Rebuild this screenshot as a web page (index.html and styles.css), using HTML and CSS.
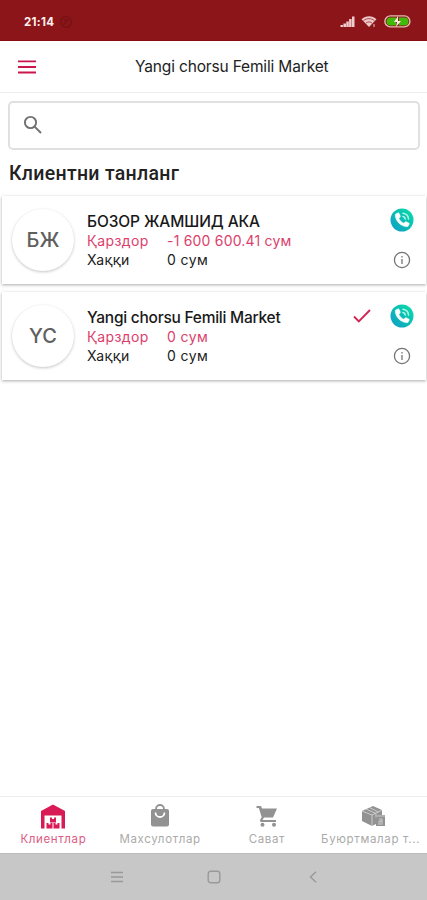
FILE: index.html
```html
<!DOCTYPE html>
<html lang="uz">
<head>
<meta charset="utf-8">
<meta name="viewport" content="width=device-width">
<title>Yangi chorsu Femili Market</title>
<link rel="stylesheet" href="styles.css">
</head>
<body>
<svg class="defs" width="0" height="0" aria-hidden="true">
  <defs>
    <linearGradient id="teal" x1="1" y1="0" x2="0" y2="1">
      <stop offset="0" stop-color="#08dfa5"/><stop offset="1" stop-color="#109bc8"/>
    </linearGradient>
    <symbol id="call" viewBox="0 0 24 24">
      <circle cx="12" cy="12" r="11.5" fill="url(#teal)"/>
      <path d="M6.1 5.8 8 4.9c.5-.2.9 0 1.100.4l1.200 2.700c.2.400.1.800-.2 1.100L8.900 10.200c.9 2.300 2.600 4.100 4.900 5l1.300-1.300c.3-.3.700-.3 1.100-.2l2.600 1.300c.4.200.5.600.4 1l-.9 1.900c-.3.500-.8.800-1.400.8C10.800 18.500 5.200 12.700 5.300 7c0-.5.300-1 .8-1.200Z" fill="#fff" stroke="#fff" stroke-width=".5"/>
      <path d="M13 8.500a3 3 0 0 1 2.300 2.500M13 5.300a6.300 6.300 0 0 1 5.500 5.700" fill="none" stroke="#b5f5e8" stroke-width="1.500" stroke-linecap="round"/>
    </symbol>
    <symbol id="info" viewBox="0 0 18 18">
      <circle cx="9" cy="9" r="7.600" fill="none" stroke="#737373" stroke-width="1.300"/>
      <path d="M9 8v5M9 5v1.500" stroke="#888" stroke-width="1.500"/>
    </symbol>
  </defs>
</svg>
<div class="app">
  <div class="status">
    <span class="time">21:14</span>
    <svg class="dim" width="14" height="14" viewBox="0 0 14 14"><circle cx="7" cy="7" r="5.300"/><path d="m4.500 9.500 5-5M5 5h3"/></svg>
    <div class="signals">
      <svg width="15" height="12" viewBox="0 0 15 12"><path d="M.5 9H3v2H.5zM3.400 7.500H6V11H3.400zM6.300 5.500h2.500V11H6.300zM9.100 3h2.500v8H9.100zM12 .5h2.500V11H12z" fill="#f0cccc"/></svg>
      <svg class="wifi" width="16" height="13" viewBox="0 0 16 13"><path d="M.5 4.200C4.800.2 11.200.2 15.500 4.200L8 12Z" fill="#edc9c9"/><path d="M2.500 5.600c3.500-2.600 7.500-2.600 11 0M5 8c2-1.500 4-1.500 6 0" fill="none" stroke="#8b1518" stroke-width=".7"/><path d="M13 9v3" fill="none" stroke="#edc9c9"/></svg>
      <svg class="battery" width="27" height="13" viewBox="0 0 27 13"><rect x=".9" y=".9" width="25" height="11" rx="5.500" fill="#8b1518" stroke="#e5b9b0" stroke-width="1.400"/><path d="M6.500 2.500H12v8H6.500a4 4 0 0 1 0-8ZM15 2.500h5.500a4 4 0 0 1 0 8H15Z" fill="#41b909"/><path d="m14 1-4 6h3l-1 5 5-6h-3Z" fill="#ffe9e4"/></svg>
    </div>
  </div>
  <header class="header">
    <svg class="menu" width="18" height="14" viewBox="0 0 18 14"><path d="M0 1.300h18M0 7h18M0 12.500h18" stroke="#cc174d" stroke-width="1.800"/></svg>
    <h1>Yangi chorsu Femili Market</h1>
  </header>
  <main>
    <div class="search"><svg width="20" height="20" viewBox="0 0 20 20"><circle cx="7.500" cy="7.500" r="5.600"/><path d="m11.600 11.600 6.400 6.400"/></svg></div>
    <h2>Клиентни танланг</h2>
    <article class="card">
      <div class="avatar">БЖ</div>
      <div class="details">
        <div class="name cyr">БОЗОР ЖАМШИД АКА</div>
        <div class="row debt"><span>Қарздор</span><span class="amount">-1 600 600.41 сум</span></div>
        <div class="row"><span>Хаққи</span><span>0 сум</span></div>
      </div>
      <div class="actions"><svg width="24" height="24"><use href="#call"/></svg><svg width="18" height="18"><use href="#info"/></svg></div>
    </article>
    <article class="card">
      <div class="avatar">YC</div>
      <div class="details">
        <div class="name">Yangi chorsu Femili Market</div>
        <div class="row debt"><span>Қарздор</span><span>0 сум</span></div>
        <div class="row"><span>Хаққи</span><span>0 сум</span></div>
      </div>
      <svg class="check" width="18" height="14" viewBox="0 0 18 14"><path d="m1 7.500 4.800 4.800L17 1"/></svg>
      <div class="actions"><svg width="24" height="24"><use href="#call"/></svg><svg width="18" height="18"><use href="#info"/></svg></div>
    </article>
  </main>
  <nav class="tabs">
    <div class="tab active"><svg width="26" height="25" viewBox="0 0 26 25"><path d="M13 .5 25 7v17.500h-3.500V11.500h-17v13H1V7Z"/><path d="M10 13.500h2v1.500h2v-1.500h2v5h-6ZM6.500 19h2v1.500h2V19h2v5.500h-6ZM13.500 19h2v1.500h2V19h2v5.500h-6Z"/></svg><span>Клиентлар</span></div>
    <div class="tab"><svg width="26" height="25" viewBox="0 0 26 25"><path d="M6 5h14a2 2 0 0 1 2 2v13.500a2 2 0 0 1-2 2H6a2 2 0 0 1-2-2V7c0-1.100.9-2 2-2Z"/><path d="M9 6V5a4 4 0 0 1 8 0v1" fill="none" stroke="#929292" stroke-width="1.800"/><path d="M8.500 8.500a4.500 4.500 0 0 0 9 0" fill="none" stroke="#fff" stroke-width="1.800"/></svg><span>Махсулотлар</span></div>
    <div class="tab"><svg width="26" height="25" viewBox="0 0 26 25"><path d="M2.500 2H7L8 4.500h15l-4 9H10L8.500 16H22v2H7.500c-1.500 0-2-1.200-1.300-2.300l1.500-2.500L4.900 4H2.500Z"/><circle cx="8.500" cy="20.800" r="2"/><circle cx="20" cy="20.800" r="2"/></svg><span>Сават</span></div>
    <div class="tab"><svg width="26" height="25" viewBox="0 0 26 25"><path d="m1 7 11-5 9 4v5h3v11h-9v-2l-4 2L1 17Z"/><path d="m1 7 10 4 10-5M11 11v11M5 5l10 4.500v4M8.500 3.500l9 4.500M16 12h8M19 14v3h2v-3" fill="none" stroke="#d8d8d8" stroke-width=".8"/><path d="M17 18h5M17 20h5" stroke="#ddd" stroke-width=".8"/></svg><span class="long">Буюртмалар т...</span></div>
  </nav>
  <div class="system">
    <svg width="12" height="12" viewBox="0 0 12 12"><path d="M0 1.500h12M0 6h12M0 10.500h12"/></svg>
    <svg width="14" height="14" viewBox="0 0 14 14"><rect x="1.200" y="1.200" width="11.600" height="11.600" rx="2.500"/></svg>
    <svg width="8" height="12" viewBox="0 0 8 12"><path d="M7 .8 1.500 6 7 11.200"/></svg>
  </div>
</div>
</body>
</html>
```
FILE: styles.css
```css
* { box-sizing: border-box; }
body { margin: 0; background: #fff; font-family: Inter, "Noto Sans", sans-serif; color: #222; }
.defs { position: absolute; }
svg { display: block; flex-shrink: 0; }
.app { width: 427px; height: 900px; display: flex; flex-direction: column; overflow: hidden; }
.status { height: 41px; flex-shrink: 0; background: #8b1518; border-bottom: 1px solid #870c0f; display: flex; align-items: center; padding: 3px 16px 0 24px; }
.time { color: #fff0ee; font-size: 11.5px; font-weight: 700; letter-spacing: .3px; }
.dim { margin-left: 5px; fill: none; stroke: #751114; stroke-width: 1.300; }
.signals { display: flex; align-items: center; margin-left: auto; }
.wifi { margin-left: 6px; }
.battery { margin-left: 7px; }
.header { height: 52px; flex-shrink: 0; border-bottom: 1px solid #ededed; display: grid; grid-template-columns: 117px 1fr; align-items: center; padding-left: 18px; }
h1 { font-size: 15.5px; line-height: 22px; font-weight: 400; letter-spacing: -.16px; margin: 0; white-space: nowrap; }
main { flex: 1; }
.search { height: 49px; margin: 8px 7px 0 8px; border: 2px solid #e0e0e0; border-radius: 5px; display: flex; align-items: center; padding-left: 13px; }
.search svg { fill: none; stroke: #707070; stroke-width: 1.900; margin-top: -2px; }
h2 { font-family: Roboto, sans-serif; font-size: 19.5px; line-height: 25px; font-weight: 500; letter-spacing: .3px; margin: 11px 0 10px 9px; }
.card { height: 88px; margin: 0 1px 8px 2px; background: #fff; box-shadow: 0 1px 3px #aaa; display: flex; padding: 13px 12px 0 10px; }
.avatar { width: 62px; height: 62px; border-radius: 50%; box-shadow: 0 1px 3px #c4c4c4; display: flex; align-items: center; justify-content: center; color: #606060; font-size: 20px; font-weight: 450; }
.details { margin-left: 13px; padding-top: 2px; flex: 1; white-space: nowrap; }
.name { height: 20px; font-size: 15.5px; line-height: 22px; color: #191919; font-weight: 500; letter-spacing: -.25px; }
.cyr { letter-spacing: -.1px; }
.row { display: grid; grid-template-columns: 80px auto; font-size: 14px; line-height: 19px; letter-spacing: .4px; }
.debt { color: #dc3e6c; }
.amount { letter-spacing: .2px; }
.actions { display: flex; flex-direction: column; align-items: center; gap: 19px; margin-top: -1px; }
.check { margin: 4px 19px 0 0; fill: none; stroke: #d32555; stroke-width: 1.900; }
.tabs { height: 57px; flex-shrink: 0; border-top: 1px solid #eee; display: grid; grid-template-columns: repeat(4, 1fr); }
.tab { display: flex; flex-direction: column; align-items: center; padding-top: 7px; color: #aaa; fill: #929292; font-size: 11.5px; line-height: 17px; letter-spacing: .65px; white-space: nowrap; }
.tab span { margin-top: 2px; }
.long { margin-right: 6px; }
.active { color: #dc5c83; fill: #d81b55; }
.system { height: 47px; flex-shrink: 0; background: #c7c7c7; border-top: 1px solid #bbb; display: grid; grid-template-columns: 96px 102px 1fr; align-items: center; padding-left: 111px; fill: none; stroke: #999; stroke-width: 1.400; }
```
